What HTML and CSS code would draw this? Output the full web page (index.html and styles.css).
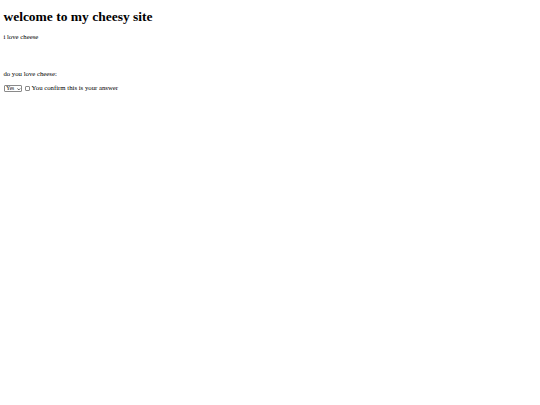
FILE: index.html
```html
<!DOCTYPE html>
<html>
<head>
<meta charset="utf-8">
<link rel="stylesheet" href="styles.css">
</head>
<body class="page">
<h1 class="title">welcome to my cheesy site</h1>
<p class="intro">i love cheese</p>
<form class="quiz">
<p class="question">do you love cheese:</p>
<div class="answer">
<span class="select-wrap"><select class="choice"><option>Yes</option><option>No</option></select><svg class="chev" viewBox="0 0 10 6" width="4" height="3"><path d="M1 1 L5 5 L9 1" fill="none" stroke="#000" stroke-width="1.8"/></svg></span>
<input type="checkbox" class="confirm" id="confirm"><label for="confirm" class="confirm-label">You confirm this is your answer</label>
</div>
</form>
</body>
</html>
```

FILE: styles.css
```css
.page {
  margin: 3.4px;
  font-family: "Liberation Serif", "Times New Roman", serif;
  font-size: 6.75px;
  color: #000;
  background: #fff;
}
.title {
  font-size: 13.5px;
  margin: 5.7px 0 7.7px;
}
.intro {
  margin: 6.75px 0;
}
.question {
  margin: 0;
}
.quiz {
  margin-top: 30.2px;
}
.answer {
  display: flex;
  align-items: center;
  gap: 1.6px;
  margin-top: 6.9px;
}
.select-wrap {
  position: relative;
  display: inline-flex;
  margin-left: 0.6px;
}
.choice {
  appearance: none;
  font-family: "Liberation Serif", "Times New Roman", serif;
  font-size: 5.4px;
  line-height: 1;
  height: 6.6px;
  width: 18px;
  padding: 0 0 0 1.3px;
  margin: 0;
  border: 0.6px solid #8a8a8a;
  border-radius: 1px;
  background: #fff;
  color: #000;
}
.chev {
  position: absolute;
  right: 1.4px;
  top: 2.2px;
  width: 3.6px;
  height: 2.4px;
}
.confirm {
  appearance: none;
  width: 4.8px;
  height: 4.8px;
  margin: 0 0 0 1.6px;
  border: 0.6px solid #8a8a8a;
  border-radius: 1px;
  background: #fff;
}
.confirm-label {
  font-size: 6.75px;
  margin-bottom: 2.6px;
}
```
